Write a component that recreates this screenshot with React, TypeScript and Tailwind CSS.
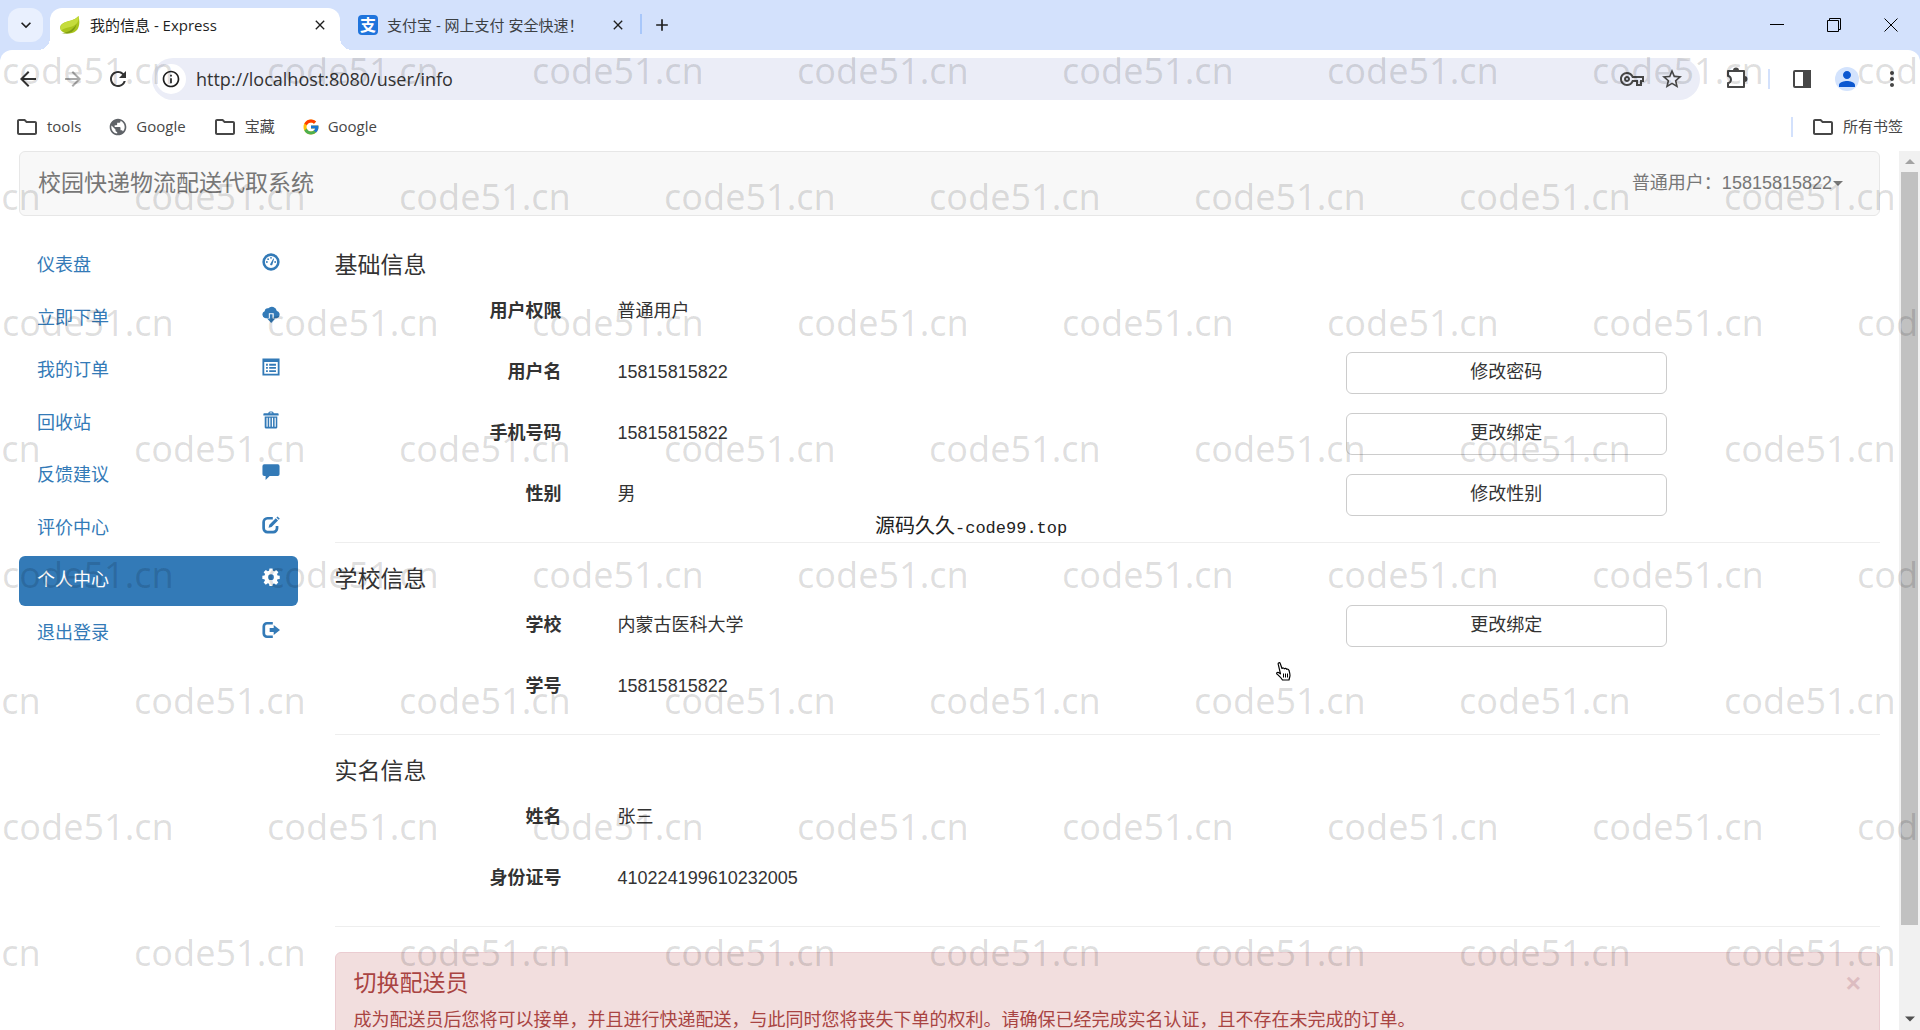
import type { ReactNode } from "react";
import { FcGoogle } from "react-icons/fc";
import {
  MdAdd,
  MdArrowBack,
  MdArrowForward,
  MdClose,
  MdInfoOutline,
  MdKeyboardArrowDown,
  MdMoreVert,
  MdOutlineFolder,
  MdOutlineVpnKey,
  MdPerson,
  MdPublic,
  MdRefresh,
  MdStarBorder,
} from "react-icons/md";

function Glyph({ children }: { children: ReactNode }) {
  return (
    <svg viewBox="0 0 20 20" className="size-[18px] shrink-0" fill="currentColor" aria-hidden="true">
      {children}
    </svg>
  );
}

const glyphs: Record<string, ReactNode> = {
  dashboard: (
    <>
      <circle cx="10" cy="10" r="8.2" fill="none" stroke="currentColor" strokeWidth="2.8" />
      <path d="M9 12.4 12.6 6l.8.4-2 6.800a1.400 1.400 0 0 1-2.400-.8Z" />
      <circle cx="5.4" cy="10" r="1" />
      <circle cx="6.8" cy="6.9" r="1" />
      <circle cx="10" cy="5.4" r="1" />
      <circle cx="14.6" cy="10" r="1" />
    </>
  ),
  cloud: (
    <>
      <path d="M4 13.200a3.700 3.700 0 0 1-.4-7.200A3 3 0 0 1 7 3.600 5 5 0 0 1 15.800 6 3.700 3.700 0 0 1 16 13.200h-3V8H7.500v5.200Z" />
      <path d="M4 13.700a4.200 4.200 0 0 1-1-8A3.600 3.600 0 0 1 7 2.600a5.600 5.600 0 0 1 9.500 2.900 4.200 4.200 0 0 1-.5 8.200h-2.600V7.500H7v6.200Z" />
      <path d="M8.700 9.200h3V14h3L10.200 19 5.700 14h3Z" />
    </>
  ),
  list: (
    <>
      <path fillRule="evenodd" d="M.5.5h19v19H.5Zm2 4v13h15v-13Z" />
      <path d="M4.500 6.500h2v2h-2Zm3.500 0h7.500v2H8Zm-3.500 3.500h2v2h-2ZM8 10h7.500v2H8Zm-3.500 3.500h2v2h-2Zm3.500 0h7.500v2H8Z" />
    </>
  ),
  trash: (
    <>
      <path d="M7 2.500C7 1 8 .5 10 .5s3 .5 3 2h4.500a1 1 0 0 1 1 1V5h-17V3.500a1 1 0 0 1 1-1Zm1.500 0h3c0-.7-.5-.8-1.500-.8s-1.500.1-1.500.8Z" />
      <path fillRule="evenodd" d="M3 6h14v12a1.500 1.500 0 0 1-1.500 1.500h-11A1.500 1.500 0 0 1 3 18Zm2 1.500v10h1.300v-10Zm3 0v10h1.300v-10Zm3 0v10h1.300v-10Zm3 0v10h1.300v-10Z" />
    </>
  ),
  comment: <path d="M2.500 1.500h15a2 2 0 0 1 2 2v9a2 2 0 0 1-2 2H8.500L4 19v-4.500H2.500a2 2 0 0 1-2-2v-9a2 2 0 0 1 2-2Z" />,
  edit: (
    <>
      <path d="M12 2.500H6A4.200 4.200 0 0 0 1.800 6.700v7A4.200 4.200 0 0 0 6 17.900h6.500a4.200 4.200 0 0 0 4.200-4.200V11" fill="none" stroke="currentColor" strokeWidth="3" />
      <path d="m7.300 13 .8-3.300 7.200-7.200 2.500 2.500-7.200 7.200ZM16 1.800 17.300.5l2.500 2.500-1.300 1.300Z" />
    </>
  ),
  cog: (
    <path
      fillRule="evenodd"
      d="M8.300.5h3.400l.5 2.600 1.400.6 2.200-1.500 2.400 2.400-1.500 2.200.6 1.400 2.400.5v3.400l-2.500.5-.6 1.400 1.500 2.200-2.400 2.400-2.200-1.500-1.400.6-.5 2.300H8.300l-.5-2.400-1.400-.6-2.200 1.500-2.400-2.400L3.300 14l-.6-1.400-2.300-.5V8.700l2.400-.5.600-1.400L1.800 4.600l2.400-2.400 2.200 1.500 1.400-.6ZM10 7a3.200 3.200 0 1 0 0 6.400A3.200 3.200 0 0 0 10 7Z"
    />
  ),
  logout: (
    <>
      <path d="M12 2.500H5.500A3.500 3.500 0 0 0 2 6v8a3.500 3.500 0 0 0 3.500 3.500H12" fill="none" stroke="currentColor" strokeWidth="3" />
      <path d="M8.500 7.800H13V4.500l7 5.500-7 5.500v-3.300H8.500Z" />
    </>
  ),
};

const navItems = [
  { label: "仪表盘", icon: "dashboard" },
  { label: "立即下单", icon: "cloud" },
  { label: "我的订单", icon: "list" },
  { label: "回收站", icon: "trash" },
  { label: "反馈建议", icon: "comment" },
  { label: "评价中心", icon: "edit" },
  { label: "个人中心", icon: "cog", active: true },
  { label: "退出登录", icon: "logout" },
];

type Row = { label: string; value: string; action?: string };

const sections: { title: string; rows: Row[] }[] = [
  {
    title: "基础信息",
    rows: [
      { label: "用户权限", value: "普通用户" },
      { label: "用户名", value: "15815815822", action: "修改密码" },
      { label: "手机号码", value: "15815815822", action: "更改绑定" },
      { label: "性别", value: "男", action: "修改性别" },
    ],
  },
  {
    title: "学校信息",
    rows: [
      { label: "学校", value: "内蒙古医科大学", action: "更改绑定" },
      { label: "学号", value: "15815815822" },
    ],
  },
  {
    title: "实名信息",
    rows: [
      { label: "姓名", value: "张三" },
      { label: "身份证号", value: "410224199610232005" },
    ],
  },
];

function TabStrip() {
  return (
    <div className="flex h-[50px] shrink-0 items-end pl-2 text-[15px] text-[#1f1f1f]">
      <button aria-label="搜索标签页" className="mb-2 flex h-[34px] w-[35px] items-center justify-center rounded-xl bg-[#e9f0fe]">
        <MdKeyboardArrowDown className="size-5" />
      </button>
      <div className="relative ml-[7px] flex h-[42px] w-[290px] items-center rounded-t-xl bg-white pr-3 pb-2 pl-2.5">
        <span className="absolute bottom-0 -left-3 size-3 bg-[radial-gradient(circle_at_0_0,transparent_12px,white_12px)]" />
        <span className="absolute -right-3 bottom-0 size-3 bg-[radial-gradient(circle_at_100%_0,transparent_12px,white_12px)]" />
        <svg viewBox="0 0 20 20" className="mr-2.5 size-5" aria-hidden="true">
          <path d="M18.500 1c1.800 6.500 1.500 17-9 17.500C4 18.800 0 16 .2 12.500.5 5.500 13 7.500 18.500 1Z" fill="#a9c41c" />
          <path d="M18.500 1c.8 4-1 9-6.500 10.500-4 1-8 1.500-11 4C-1 8 6 7 11 5.500 14.500 4.500 17 3 18.500 1Z" fill="#c5dc3c" />
          <path d="M1.500 18.500c4-.5 11-2.500 15-9.500-1 6-6 10-10.500 9.500-1.500-.2-3 .2-4.500 0Z" fill="#7f9c14" />
        </svg>
        <span className="flex-1">我的信息 - Express</span>
        <button aria-label="关闭标签页">
          <MdClose className="size-4" />
        </button>
      </div>
      <div className="flex h-[42px] w-[300px] items-center pb-2 pl-[18px]">
        <span className="mr-[9px] flex size-5 items-center justify-center rounded-sm bg-[#1f74dc] text-base leading-5 font-bold text-white">支</span>
        <span className="flex-1 text-[#3c4043]">支付宝 - 网上支付 安全快速！</span>
        <button aria-label="关闭标签页" className="mr-3.5">
          <MdClose className="size-4" />
        </button>
      </div>
      <span className="mb-4 h-5 w-0.5 bg-[#a8c7fa]" />
      <button aria-label="新建标签页" className="mb-[15px] ml-2.5">
        <MdAdd className="size-5" />
      </button>
      <div className="ml-auto flex h-full items-center gap-[43px] pr-[22px] text-black">
        <button aria-label="最小化">
          <svg viewBox="0 0 14 14" className="size-3.5" stroke="currentColor"><path d="M0 6.500h14" /></svg>
        </button>
        <button aria-label="还原">
          <svg viewBox="0 0 14 14" className="size-3.5" fill="none" stroke="currentColor">
            <path d="M.5 2.500h11v11H.5ZM2.500 2.500v-2h11v11h-2" />
          </svg>
        </button>
        <button aria-label="关闭">
          <svg viewBox="0 0 14 14" className="size-3.5" stroke="currentColor"><path d="m.5.5 13 13m0-13-13 13" /></svg>
        </button>
      </div>
    </div>
  );
}

function Toolbar() {
  return (
    <div className="flex h-[54px] items-center rounded-t-xl bg-white px-4 pt-2 pb-1 text-[#474747]">
      <button aria-label="后退" className="mr-[21px]"><MdArrowBack className="size-6 text-[#333]" /></button>
      <button aria-label="前进" className="mr-[21px]"><MdArrowForward className="size-6 text-[#aaa]" /></button>
      <button aria-label="重新加载" className="mr-[22px]"><MdRefresh className="size-6 text-[#333]" /></button>
      <form className="flex h-[42px] flex-1 items-center rounded-full bg-[#ebedf7] pr-4 pl-1" onSubmit={(e) => e.preventDefault()}>
        <span className="flex size-[30px] items-center justify-center rounded-full bg-white">
          <MdInfoOutline className="size-5 text-[#1f1f1f]" />
        </span>
        <input aria-label="地址" defaultValue="http://localhost:8080/user/info" className="ml-2.5 min-w-0 flex-1 bg-transparent text-[18px] text-[#333] outline-none" />
        <button type="button" aria-label="密码" className="mr-4"><MdOutlineVpnKey className="size-6" /></button>
        <button type="button" aria-label="收藏"><MdStarBorder className="size-6" /></button>
      </form>
      <button aria-label="扩展程序" className="ml-6">
        <svg viewBox="0 0 24 24" className="size-6" fill="none" stroke="currentColor" strokeWidth="2" strokeLinejoin="round">
          <path d="M4 4h16v16H4v-4c1.500 0 3-1.500 3-3.500S5.500 9 4 9Z" />
          <path d="M10 3.500a2 2 0 0 1 4 0ZM20.500 10a2 2 0 0 1 0 4Z" fill="currentColor" />
        </svg>
      </button>
      <span className="mx-5 h-5 w-0.5 bg-[#d3e1fc]" />
      <button aria-label="侧边栏">
        <svg viewBox="0 0 24 24" className="size-6" fill="none" stroke="currentColor" strokeWidth="2">
          <rect x="4" y="4" width="16" height="16" rx="1" />
          <path d="M14 4h6v16h-6Z" fill="currentColor" />
        </svg>
      </button>
      <button aria-label="用户" className="mx-[21px] flex size-6 items-center justify-center rounded-full bg-[#d3e3fd] text-[#0b57d0]">
        <MdPerson className="size-6" />
      </button>
      <button aria-label="菜单"><MdMoreVert className="size-6" /></button>
    </div>
  );
}

function Bookmarks() {
  return (
    <nav className="flex h-[47px] items-center bg-white px-[15px] pb-0.5 text-[15px] text-[#474747]">
      <a href="#tools" className="mr-[27px] flex items-center gap-2"><MdOutlineFolder className="size-6" />tools</a>
      <a href="#google" className="mr-[27px] flex items-center gap-2"><MdPublic className="size-5 text-[#5f6368]" />Google</a>
      <a href="#treasure" className="mr-[27px] flex items-center gap-2"><MdOutlineFolder className="size-6" />宝藏</a>
      <a href="#search" className="flex items-center gap-2"><FcGoogle className="size-[18px]" />Google</a>
      <span className="ml-auto h-5 w-0.5 bg-[#d3e1fc]" />
      <a href="#all" className="mr-0.5 ml-[18px] flex items-center gap-2"><MdOutlineFolder className="size-6" />所有书签</a>
    </nav>
  );
}

function Sidebar() {
  return (
    <ul className="flex h-[418px] flex-col justify-between pr-[19px] pl-[19px]">
      {navItems.map((item) => (
        <li key={item.label}>
          <a
            href="#nav"
            className={
              item.active
                ? "flex h-[50px] items-start justify-between rounded-md bg-[#337ab7] px-[18px] pt-3 leading-[25px] text-white"
                : "flex h-[50px] items-start justify-between px-[18px] pt-3 leading-[25px] text-[#337ab7]"
            }
          >
            {item.label}
            <Glyph>{glyphs[item.icon]}</Glyph>
          </a>
        </li>
      ))}
    </ul>
  );
}

function Section({ title, rows, first }: { title: string; rows: Row[]; first: boolean }) {
  return (
    <section className={first ? "pb-[7px]" : "border-t border-[#eee] pt-6 pb-[7px]"}>
      <h4 className="mb-[13px] text-[23px] leading-[25px]">{title}</h4>
      {rows.map((row) => (
        <dl key={row.label} className="mb-[19px] grid h-[42px] grid-cols-[227fr_56fr_728fr_321fr_213fr]">
          <dt className="pt-2 text-right leading-[25px] font-bold">{row.label}</dt>
          <dd className="col-start-3 pt-2 leading-[25px]">{row.value}</dd>
          {row.action && (
            <dd>
              <button className="h-[42px] w-full rounded-md border border-[#ccc] bg-white pb-0.5">{row.action}</button>
            </dd>
          )}
        </dl>
      ))}
    </section>
  );
}

function Watermark() {
  return (
    <div aria-hidden="true" className="pointer-events-none absolute inset-0 overflow-hidden pt-2 font-['Noto_Sans',sans-serif] text-[36px] text-black/13 select-none">
      {Array.from({ length: 8 }, (_, r) => (
        <div key={r} className={r % 2 ? "-ml-[131px] flex h-[126px] items-center" : "ml-0.5 flex h-[126px] items-center"}>
          {Array.from({ length: 8 }, (_, c) => (
            <span key={c} className="w-[265px] shrink-0">code51.cn</span>
          ))}
        </div>
      ))}
    </div>
  );
}

export default function App() {
  return (
    <div className="relative flex h-screen flex-col overflow-hidden bg-[#d3e1fc] font-['Open_Sans','Noto_Sans_CJK_SC',sans-serif]">
      <TabStrip />
      <Toolbar />
      <Bookmarks />
      <div className="flex min-h-0 flex-1 bg-white font-['Liberation_Sans','Noto_Sans_CJK_SC',sans-serif] text-[18px] text-[#333]">
        <div className="min-w-0 flex-1 overflow-hidden">
          <header className="mr-[19px] ml-[19px] flex h-[65px] items-center justify-between rounded-md border border-[#e7e7e7] bg-[#f8f8f8] px-[18px] text-[#777]">
            <a href="#home" className="text-[23px]">校园快递物流配送代取系统</a>
            <button className="flex items-center pr-[18px]">
              普通用户：15815815822
              <svg viewBox="0 0 10 5" className="ml-px h-[5px] w-2.5" fill="currentColor"><path d="M0 0h10L5 5Z" /></svg>
            </button>
          </header>
          <div className="grid grid-cols-[1fr_5fr] pt-[25px]">
            <Sidebar />
            <main className="min-w-0 pt-3 pr-[19px] pl-[18px]">
              {sections.map((s, i) => (
                <Section key={s.title} title={s.title} rows={s.rows} first={i === 0} />
              ))}
              <div className="border-t border-[#eee] pt-[25px]">
                <div role="alert" className="rounded-md border border-[#ebccd1] bg-[#f2dede] px-[18px] pt-[18px] pb-[19px] text-[#a94442]">
                  <div className="flex items-center justify-between">
                    <h4 className="text-[23px] leading-[25px]">切换配送员</h4>
                    <button aria-label="关闭提示" className="text-[26px] leading-[25px] font-bold text-[#dcbcc0]">×</button>
                  </div>
                  <p className="mt-3 leading-[25px]">成为配送员后您将可以接单，并且进行快递配送，与此同时您将丧失下单的权利。请确保已经完成实名认证，且不存在未完成的订单。</p>
                </div>
              </div>
            </main>
          </div>
        </div>
        <div aria-hidden="true" className="flex w-[21px] flex-col items-center bg-[#f1f1f1] py-2">
          <svg viewBox="0 0 10 5" className="mb-2 h-[5px] w-2.5" fill="#a3a3a3"><path d="M0 5h10L5 0Z" /></svg>
          <div className="flex w-full flex-1 flex-col">
            <div className="mx-0.5 flex-[754] bg-[#c1c1c1]" />
            <div className="flex-[91]" />
          </div>
          <svg viewBox="0 0 10 5" className="h-[6px] w-2.5" fill="#505050"><path d="M0 0h10L5 5Z" /></svg>
        </div>
      </div>
      <div className="pointer-events-none absolute top-[511px] left-[875px] flex items-baseline text-xl text-[#222]">
        <span className="font-['Noto_Sans_CJK_SC',sans-serif]">源码久久</span>
        <span className="font-['Liberation_Mono',monospace] text-[17px]">-code99.top</span>
      </div>
      <svg viewBox="0 0 17 19" className="pointer-events-none absolute top-[662px] left-[1275px] h-[19px] w-[17px]" fill="white" stroke="black" strokeWidth="1.2" strokeLinejoin="round" aria-hidden="true">
        <path d="M3.200 2.200c-.3-1.600 1.600-2 2.100-.6L7 6.500c.8-.9 2-.6 2.300.3.800-.7 2-.4 2.300.5.900-.5 2-.1 2.300 1 .7 2.200 1.500 4 .9 6.200L14 18H7.500c-1.500-2.500-3.500-4.200-5.500-6-.9-1 .3-2.200 1.500-1.500l2 1.300Z" />
        <path d="M8.500 11.500v4m2-4v4m2-4v4" strokeWidth="1" />
      </svg>
      <Watermark />
    </div>
  );
}
